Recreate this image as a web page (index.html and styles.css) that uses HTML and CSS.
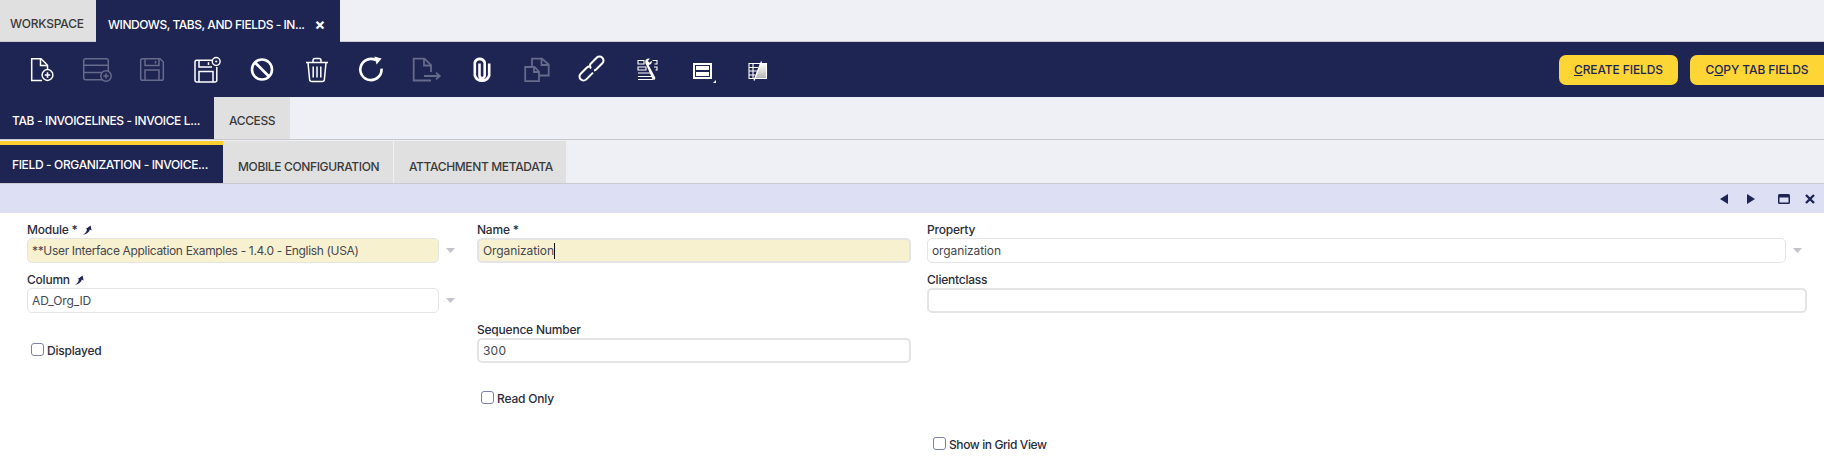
FILE: index.html
```html
<!DOCTYPE html>
<html lang="en">
<head>
<meta charset="utf-8">
<title>Windows, Tabs, and Fields</title>
<link rel="stylesheet" href="styles.css">
</head>
<body>
<svg class="defs" width="0" height="0" aria-hidden="true">
  <defs>
    <symbol id="pin" viewBox="0 0 10 10"><path d="M0.5 9.8C3 9 4.6 7 5 4.2L3.8 4L8.6 0.4L9.6 5.4L7.8 4.6C7.2 7.4 4.4 9.6 0.5 9.8Z"/></symbol>
    <symbol id="caret" viewBox="0 0 9 5"><path d="M0 0H9L4.5 5Z"/></symbol>
    <linearGradient id="shade" x1="0" y1="0" x2="0" y2="1"><stop offset="0" stop-color="#ffffff"/><stop offset="1" stop-color="#b5b5b5"/></linearGradient>
  </defs>
</svg>

<nav class="tabs top-tabs">
  <div class="tab tab-plain tab-workspace">WORKSPACE</div>
  <div class="tab tab-active tab-window">WINDOWS, TABS, AND FIELDS - IN...<span class="close">×</span></div>
</nav>

<section class="toolbar">
  <div class="tool-group">
    <span class="tool"><svg viewBox="0 0 34 30"><path d="M17 25.5H6.7V3.7H16L22.5 10.2V14"/><path d="M15.5 4V10.5H22.5"/><circle cx="22.5" cy="20" r="5.4"/><path class="thick" d="M19.8 20H25.2M22.5 17.3V22.7"/></svg></span>
    <span class="tool dim"><svg viewBox="0 0 34 30"><rect x="3.7" y="3.7" width="24.6" height="21" rx="2"/><path d="M3.7 10.3H28.3M3.7 17.5H22"/><circle cx="26" cy="21" r="5.2" class="fillbg"/><path class="thick" d="M23.4 21H28.6M26 18.4V23.6"/></svg></span>
    <span class="tool dim"><svg viewBox="0 0 34 30"><path d="M7.5 3.7H25L28.3 7V23.5A1.8 1.8 0 0 1 26.5 25.3H7.5A1.8 1.8 0 0 1 5.7 23.5V5.5A1.8 1.8 0 0 1 7.5 3.7Z"/><path d="M10 3.7V10.5H24V3.7M20.5 6V8.5M10 25.3V15H24V25.3"/></svg></span>
    <span class="tool"><svg viewBox="0 0 34 30"><path d="M23 5.2H6.8A1.8 1.8 0 0 0 5 7V25.2A1.8 1.8 0 0 0 6.8 27H25A1.8 1.8 0 0 0 26.8 25.2V12"/><path d="M9 5.2V12H22M18.5 7.2V10M9 27V16.5H23V27"/><circle cx="26.2" cy="6.5" r="3.9"/><circle class="dot" cx="26.2" cy="6.5" r="1.1"/></svg></span>
    <span class="tool"><svg viewBox="0 0 34 30"><circle class="heavy" cx="17" cy="14.5" r="10"/><path class="heavy" d="M10 7.5L24 21.5"/></svg></span>
    <span class="tool"><svg viewBox="0 0 34 30"><path d="M6 7.5H28M13 7.5V5.5A2 2 0 0 1 15 3.5H19A2 2 0 0 1 21 5.5V7.5"/><path d="M8 7.5L9.6 24.5A2.2 2.2 0 0 0 11.8 26.5H22.2A2.2 2.2 0 0 0 24.4 24.5L26 7.5"/><path d="M13.2 11.5V22.5M17 11.5V22.5M20.8 11.5V22.5"/></svg></span>
    <span class="tool"><svg viewBox="0 0 34 30"><path class="heavy" d="M26.5 13.5A10.6 10.6 0 1 1 21 5.2"/><path class="solid" d="M19.3 1.6L26.6 3.4L21.6 9.4Z"/></svg></span>
    <span class="tool dim"><svg viewBox="0 0 34 30"><path class="mid" d="M21 25.5H3.7V3.7H14.5L21 10.2V17"/><path class="mid" d="M14 4V10.5H21"/><path class="mid" d="M14 21H29.5M26 17.6L29.8 21L26 24.4"/></svg></span>
    <span class="tool"><svg viewBox="0 0 34 30"><path class="heavy" d="M14.5 8.5V20.5A2.6 2.6 0 0 0 19.7 20.5V7.5A5.2 5.2 0 0 0 9.8 7.5V20.5A7.6 7.6 0 0 0 24.2 20.5V8.5"/></svg></span>
    <span class="tool dim"><svg viewBox="0 0 34 30"><path class="mid" d="M5.2 12H14.5L19 16.5V26.2H5.2Z"/><path class="mid" d="M14 12.3V17H19"/><path class="mid" d="M12 11V3.7H22L28.7 9.5V20.5H19"/><path class="mid" d="M21.5 4V10H28.7"/></svg></span>
    <span class="tool"><svg viewBox="0 0 34 30"><path class="link" d="M16 13.5A4 4 0 0 1 15.67 8.67L21.67 2.67A4 4 0 0 1 27.33 8.33L21.33 14.33A4 4 0 0 1 19 15.4"/><path class="link" d="M18 17.6L11.33 24.33A4 4 0 0 1 5.67 18.67L11.67 12.67A4 4 0 0 1 14.5 11.5"/></svg></span>
    <span class="tool"><svg viewBox="0 0 34 30"><path class="thin" d="M8 5.5H14V9H8ZM22.5 5.5H27V9H24.5M8 12H16V15H8ZM24 12H27V15H25.5M8 18H20.5M8 21.5H22M8 24.5H23"/><path class="solid" d="M15.2 6.7C15.2 4.6 17.3 2.8 19.8 3.8L17.8 5.9L19.6 7.8L21.6 5.8C22.4 8 20.8 10 18.6 9.9L25.2 22.4C25.8 24.4 23.7 25.6 22.4 24.1L16.4 10.3C15.6 9.3 15.2 8 15.2 6.7Z"/></svg></span>
    <span class="tool"><svg viewBox="0 0 34 30"><rect class="frame" x="9" y="9" width="17" height="14"/><path class="solid" d="M11 11H24V15H11ZM11 17H24V21H11Z"/><path class="solid" d="M31 25V28H28Z"/></svg></span>
    <span class="tool"><svg viewBox="0 0 34 30"><path class="shade" d="M20 8.5H26.5V23.5H14.5Z"/><path class="thin" d="M9 8.5H26.5V23.5H9ZM9 12.5H18M9 16H17M9 20H15.5M13 8.5V23.5"/><path class="streak" d="M21.5 6.5L14 25.5"/></svg></span>
  </div>
  <div class="actions">
    <button class="action"><u>C</u>REATE FIELDS</button>
    <button class="action">C<u>O</u>PY TAB FIELDS</button>
  </div>
</section>

<nav class="tabs mid-tabs">
  <div class="tab tab-active tab-tab">TAB - INVOICELINES - INVOICE L...</div>
  <div class="tab tab-plain tab-access">ACCESS</div>
</nav>

<nav class="tabs sub-tabs">
  <div class="tab tab-active tab-field">FIELD - ORGANIZATION - INVOICE...</div>
  <div class="tab tab-plain tab-mobile">MOBILE CONFIGURATION</div>
  <div class="tab tab-plain tab-attach">ATTACHMENT METADATA</div>
</nav>

<div class="form-bar">
  <svg class="bar-icon arrow" viewBox="0 0 8 10"><path d="M8 0V10L0 5Z"/></svg>
  <svg class="bar-icon arrow arrow-next" viewBox="0 0 8 10"><path d="M0 0V10L8 5Z"/></svg>
  <svg class="bar-icon window" viewBox="0 0 12 10"><path fill-rule="evenodd" d="M1.5 0H10.5A1.5 1.5 0 0 1 12 1.5V8.5A1.5 1.5 0 0 1 10.5 10H1.5A1.5 1.5 0 0 1 0 8.5V1.5A1.5 1.5 0 0 1 1.5 0ZM1.5 3.5V8.5H10.5V3.5Z"/></svg>
  <svg class="bar-icon cross" viewBox="0 0 10 10"><path d="M1 1L9 9M9 1L1 9"/></svg>
</div>

<main class="form">
  <div class="field col1 row1">
    <div class="label">Module * <svg class="pin"><use href="#pin"/></svg></div>
    <div class="select-wrap"><div class="input wide-1 required thin-border long-text">**User Interface Application Examples - 1.4.0 - English (USA)</div><svg class="caret"><use href="#caret"/></svg></div>
  </div>
  <div class="field col2 row1">
    <div class="label">Name *</div>
    <div class="input wide-2 required">Organization<span class="text-caret"></span></div>
  </div>
  <div class="field col3 row1">
    <div class="label">Property</div>
    <div class="select-wrap"><div class="input wide-3 thin-border">organization</div><svg class="caret"><use href="#caret"/></svg></div>
  </div>
  <div class="field col1 row2">
    <div class="label">Column <svg class="pin"><use href="#pin"/></svg></div>
    <div class="select-wrap"><div class="input wide-1 thin-border">AD_Org_ID</div><svg class="caret"><use href="#caret"/></svg></div>
  </div>
  <div class="field col3 row2">
    <div class="label">Clientclass</div>
    <div class="input wide-4"></div>
  </div>
  <div class="check col1 row3"><span class="box"></span>Displayed</div>
  <div class="field col2 row3">
    <div class="label">Sequence Number</div>
    <div class="input wide-2 digits">300</div>
  </div>
  <div class="check col2 row4"><span class="box"></span>Read Only</div>
  <div class="check col3 row5"><span class="box"></span>Show in Grid View</div>
</main>
</body>
</html>
```

FILE: styles.css
```css
* { box-sizing: border-box; }
html, body { margin: 0; padding: 0; }
body {
  width: 1824px;
  height: 458px;
  overflow: hidden;
  background: #fff;
  color: #2b2c3a;
  font-family: Inter, "Noto Sans", sans-serif;
}
.defs { position: absolute; }

.tabs { display: flex; background: #eff0f5; }
.tab {
  display: flex;
  align-items: center;
  font-size: 12px;
  font-weight: 500;
  white-space: nowrap;
  letter-spacing: -0.36px;
}
.tab-plain { background: #e0e0e0; color: #3a3a3a; }
.tab-active { background: #1f2552; color: #fff; }

.top-tabs { height: 42px; border-bottom: 1px solid #c9c9cf; }
.tab-workspace { width: 96px; padding: 5px 0 0 10px; letter-spacing: -0.2px; }
.tab-window { width: 244px; padding: 6px 0 0 12px; margin-bottom: -1px; letter-spacing: -0.46px; }
.close { margin-left: 10px; font-size: 16px; font-weight: 700; line-height: 12px; }

.toolbar {
  height: 55px;
  background: #1f2552;
  display: flex;
  justify-content: space-between;
  align-items: center;
}
.tool-group { display: flex; padding-left: 14px; }
.tool { width: 55px; height: 30px; display: flex; justify-content: center; }
.tool svg {
  width: 34px;
  height: 30px;
  fill: none;
  stroke: #fff;
  stroke-width: 1.5;
}
.tool.dim svg { stroke: #666a8b; }
.tool .thick { stroke-width: 1.6; }
.tool .heavy { stroke-width: 2.6; }
.tool .mid { stroke-width: 1.8; }
.tool .link { stroke-width: 2; }
.tool .thin { stroke-width: 1.1; }
.tool .solid { fill: #fff; stroke: none; }
.tool .dot { fill: #fff; stroke: none; }
.tool .frame { stroke-width: 2; }
.tool .shade { fill: url(#shade); stroke: none; }
.tool .streak { stroke-width: 1.3; }
.tool .fillbg { fill: #1f2552; }

.actions { display: flex; gap: 12px; }
.action {
  height: 30px;
  border: 0;
  border-radius: 7px;
  background: #fdd535;
  color: #1f2552;
  font-family: inherit;
  font-size: 12px;
  font-weight: 500;
  padding: 0;
  letter-spacing: -0.1px;
}
.action:first-child { width: 119px; }
.action:last-child { width: 134px; border-radius: 7px 0 0 7px; }

.mid-tabs { height: 43px; border-bottom: 1px solid #c6c6cc; }
.tab-tab { width: 214px; padding: 4px 0 0 12px; }
.tab-access { width: 76px; padding: 4px 0 0 15px; }

.sub-tabs { height: 44px; padding-top: 1px; border-bottom: 1px solid #c9c9cf; }
.tab-field { width: 223px; padding: 0 0 0 12px; border-top: 4px solid #fdd02f; }
.tab-mobile { width: 170px; padding: 8px 0 0 15px; }
.tab-attach { width: 172px; margin-left: 1px; padding: 8px 0 0 15px; }

.form-bar {
  height: 29px;
  background: #dde0f5;
  display: flex;
  align-items: center;
  padding-left: 1720px;
}
.bar-icon { fill: #1f2552; display: block; }
.arrow { width: 8px; height: 10px; }
.arrow-next { margin-left: 19px; }
.window { width: 12px; height: 10px; margin-left: 23px; }
.cross { width: 10px; height: 10px; margin-left: 15px; fill: none; stroke: #1f2552; stroke-width: 2.4; }

.form {
  display: grid;
  grid-template-columns: 450px 450px 883px;
  grid-template-rows: repeat(5, 50px);
  padding: 9px 0 0 27px;
}
.col1 { grid-column: 1; }
.col2 { grid-column: 2; }
.col3 { grid-column: 3; }
.row1 { grid-row: 1; }
.row2 { grid-row: 2; }
.row3 { grid-row: 3; }
.row4 { grid-row: 4; }
.row5 { grid-row: 5; }

.label {
  height: 16px;
  font-size: 12px;
  line-height: 16px;
  font-weight: 500;
  color: #2b2c3a;
  letter-spacing: -0.22px;
}
.pin { width: 10px; height: 10px; fill: #1f2552; vertical-align: -1px; margin-left: 1px; }

.select-wrap { display: flex; align-items: center; }
.caret { width: 9px; height: 5px; fill: #c3c3cb; margin-left: 7px; }

.input {
  height: 25px;
  border: 2px solid #e4e4e4;
  border-radius: 5px;
  padding-left: 4px;
  display: flex;
  align-items: center;
  font-size: 12px;
  letter-spacing: -0.1px;
  color: #46464f;
  background: #fff;
}
.thin-border { border-width: 1px; padding-left: 4px; }
.long-text { letter-spacing: -0.33px; }
.digits { letter-spacing: 0.2px; }
.required { background: #f8f1d0; }
.wide-1 { width: 412px; }
.wide-2 { width: 434px; }
.wide-3 { width: 859px; }
.wide-4 { width: 880px; }
.text-caret { width: 1px; height: 16px; background: #111; }

.check {
  display: flex;
  align-items: center;
  font-size: 12px;
  font-weight: 500;
  color: #2b2c3a;
  letter-spacing: -0.2px;
  height: 16px;
  padding-left: 4px;
  margin-top: 20px;
}
.box {
  width: 13px;
  height: 13px;
  border: 1px solid #7d80ad;
  border-radius: 3px;
  margin-right: 3px;
  margin-top: -2px;
  background: #fff;
}
.row4.check { margin-top: 18px; }
.row5.check { margin-top: 14px; padding-left: 6px; letter-spacing: -0.4px; }
```
